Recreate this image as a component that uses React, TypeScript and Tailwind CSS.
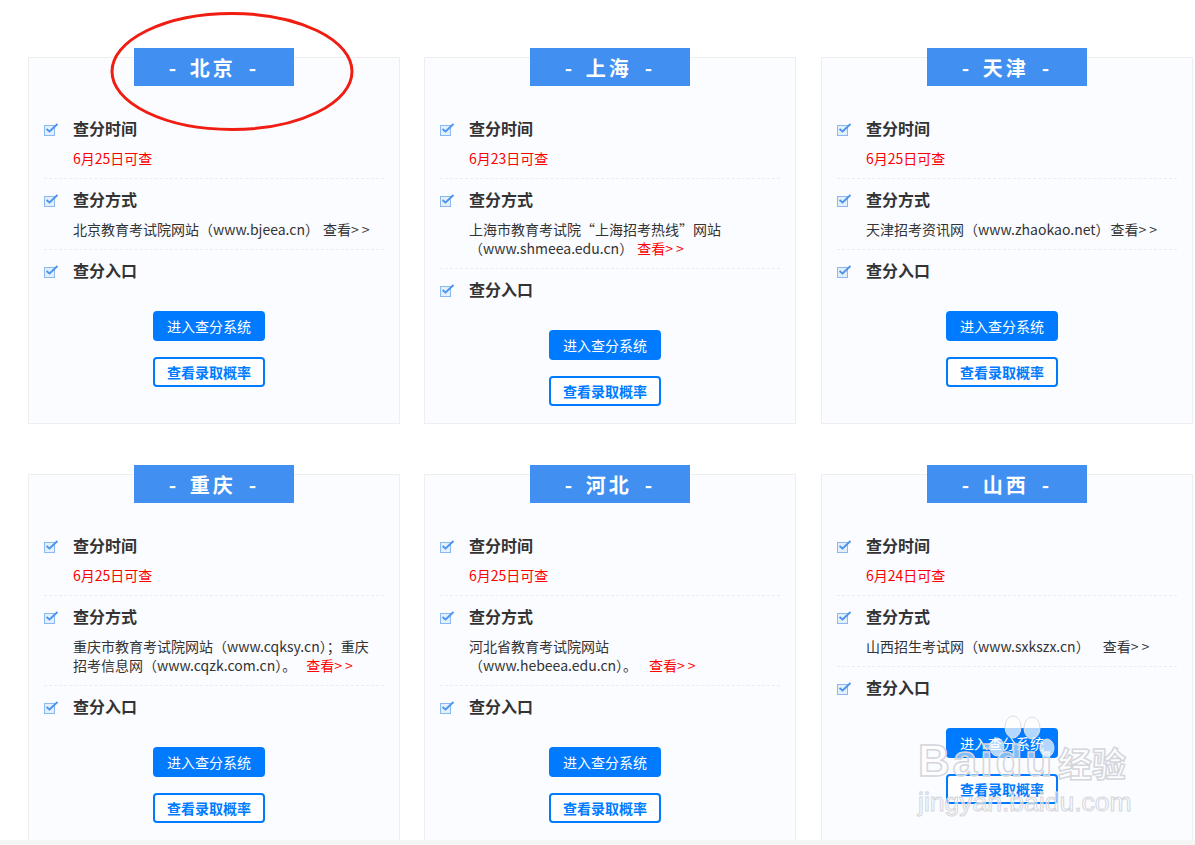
const cities = [
  { name: "北京", date: "6月25日可查", desc: "北京教育考试院网站（www.bjeea.cn）", gap: "ml-[4px]" },
  { name: "上海", date: "6月23日可查", desc: "上海市教育考试院“上海招考热线”网站（www.shmeea.edu.cn）", gap: "ml-[4px]", red: true },
  { name: "天津", date: "6月25日可查", desc: "天津招考资讯网（www.zhaokao.net）", gap: "ml-[1px]" },
  { name: "重庆", date: "6月25日可查", desc: "重庆市教育考试院网站（www.cqksy.cn）；重庆招考信息网（www.cqzk.com.cn）。", gap: "ml-[10px]", red: true },
  { name: "河北", date: "6月25日可查", desc: "河北省教育考试院网站（www.hebeea.edu.cn）。", gap: "ml-[12px]", red: true },
  { name: "山西", date: "6月24日可查", desc: "山西招生考试网（www.sxkszx.cn）", gap: "ml-[13px]" },
];

const CheckIcon = () => (
  <svg width="15" height="14" viewBox="0 0 15 14" className="absolute left-0 top-[7px]">
    <rect x="0.5" y="2.5" width="10" height="10" fill="#e4effc" stroke="#8ab8f3" />
    <path d="M2.5 6 L5.5 8.5 L13.5 1" fill="none" stroke="#4a94ee" strokeWidth="1.8" />
  </svg>
);

const Title = ({ children }: { children: React.ReactNode }) => (
  <div className="relative pl-[29px] text-base leading-6 font-bold text-[#333]">
    <CheckIcon />
    {children}
  </div>
);

const Card = ({ city }: { city: (typeof cities)[number] }) => (
  <div className="relative h-[367px] w-[372px] border border-[#eeeeee] bg-[#fbfcff] px-[15px]">
    <div className="mx-auto -mt-[10px] flex h-[38px] w-[160px] items-center justify-center bg-[#418ff0] pt-px text-xl font-bold text-white">
      <span className="whitespace-pre tracking-[3px]">
        - <span className="ml-[3px] mr-[-2px]">{city.name}</span>  -
      </span>
    </div>

    <div className="mt-[20px] border-b border-dashed border-[#e8edf3] pt-[10px] pb-[10px]">
      <Title>查分时间</Title>
      <p className="mt-[9px] pl-[29px] text-sm leading-[19px] text-[#ff0000]">{city.date}</p>
    </div>

    <div className="border-b border-dashed border-[#e8edf3] pt-[8px] pb-[10px]">
      <Title>查分方式</Title>
      <p className="mt-[9px] pr-[7px] pl-[29px] text-sm leading-[19px] text-[#333]">
        {city.desc}
        <span className={`${city.gap} ${city.red ? "text-[#ff0000]" : ""}`}>
          查看<span className="tracking-[3px]">&gt;&gt;</span>
        </span>
      </p>
    </div>

    <div className="pt-[8px]">
      <Title>查分入口</Title>
    </div>

    <div className="mt-[29px] flex flex-col items-center gap-4 pr-[10px]">
      <button className="h-[30px] w-[112px] rounded bg-[#007bff] pb-px text-sm text-white">进入查分系统</button>
      <button className="h-[30px] w-[112px] rounded border-2 border-[#007bff] bg-white pb-px text-sm font-bold text-[#007bff]">查看录取概率</button>
    </div>
  </div>
);

// baidu watermark, sits over the last card
const Watermark = () => (
  <div className="pointer-events-none absolute top-[712px] left-[916px] h-[112px] w-[216px]">
    <span className="absolute top-[25px] left-[2px] font-['Liberation_Sans',sans-serif] text-[44px] leading-[48px] font-bold tracking-[3px] text-white/50 [-webkit-text-stroke:1.5px_#d4d6dc]">
      Baidu
    </span>
    <svg width="80" height="60" viewBox="0 0 80 60" className="absolute top-0 left-[60px]">
      <g fill="#ffffff" fillOpacity="0.7" stroke="#dcdee3" strokeWidth="1">
        <ellipse cx="37" cy="15" rx="8" ry="11" />
        <ellipse cx="56" cy="16" rx="8" ry="11" />
        <ellipse cx="21" cy="35" rx="7" ry="9" />
        <ellipse cx="71" cy="36" rx="7" ry="9" />
      </g>
    </svg>
    <span className="absolute top-[31px] left-[142px] text-[34px] leading-[40px] font-bold text-white/50 [-webkit-text-stroke:1.5px_#d4d6dc]">
      经验
    </span>
    <span className="absolute top-[74px] left-[2px] font-['Liberation_Sans',sans-serif] text-[26.5px] leading-[32px] text-white/50 [-webkit-text-stroke:1px_#d4d6dc]">
      jingyan.baidu.com
    </span>
  </div>
);

export default function App() {
  return (
    <div className="relative h-[845px] w-[1195px] overflow-hidden bg-white font-['Noto_Sans_CJK_SC','Noto_Sans',sans-serif]">
      <div className="h-[840px] overflow-hidden pt-[57px] pl-[28px]">
        <div className="grid grid-cols-[372px_373px_372px] gap-x-6 gap-y-[50px]">
          {cities.map((city) => (
            <Card key={city.name} city={city} />
          ))}
        </div>
      </div>
      <div className="h-[5px] bg-[#f5f5f5]" />

      {/* hand drawn circle around the first heading */}
      <svg width="250" height="125" viewBox="0 0 250 125" className="absolute top-[10px] left-[107px]">
        <ellipse cx="125" cy="61.5" rx="120" ry="58" fill="none" stroke="#f01d12" strokeWidth="3" />
      </svg>

      <Watermark />
    </div>
  );
}
